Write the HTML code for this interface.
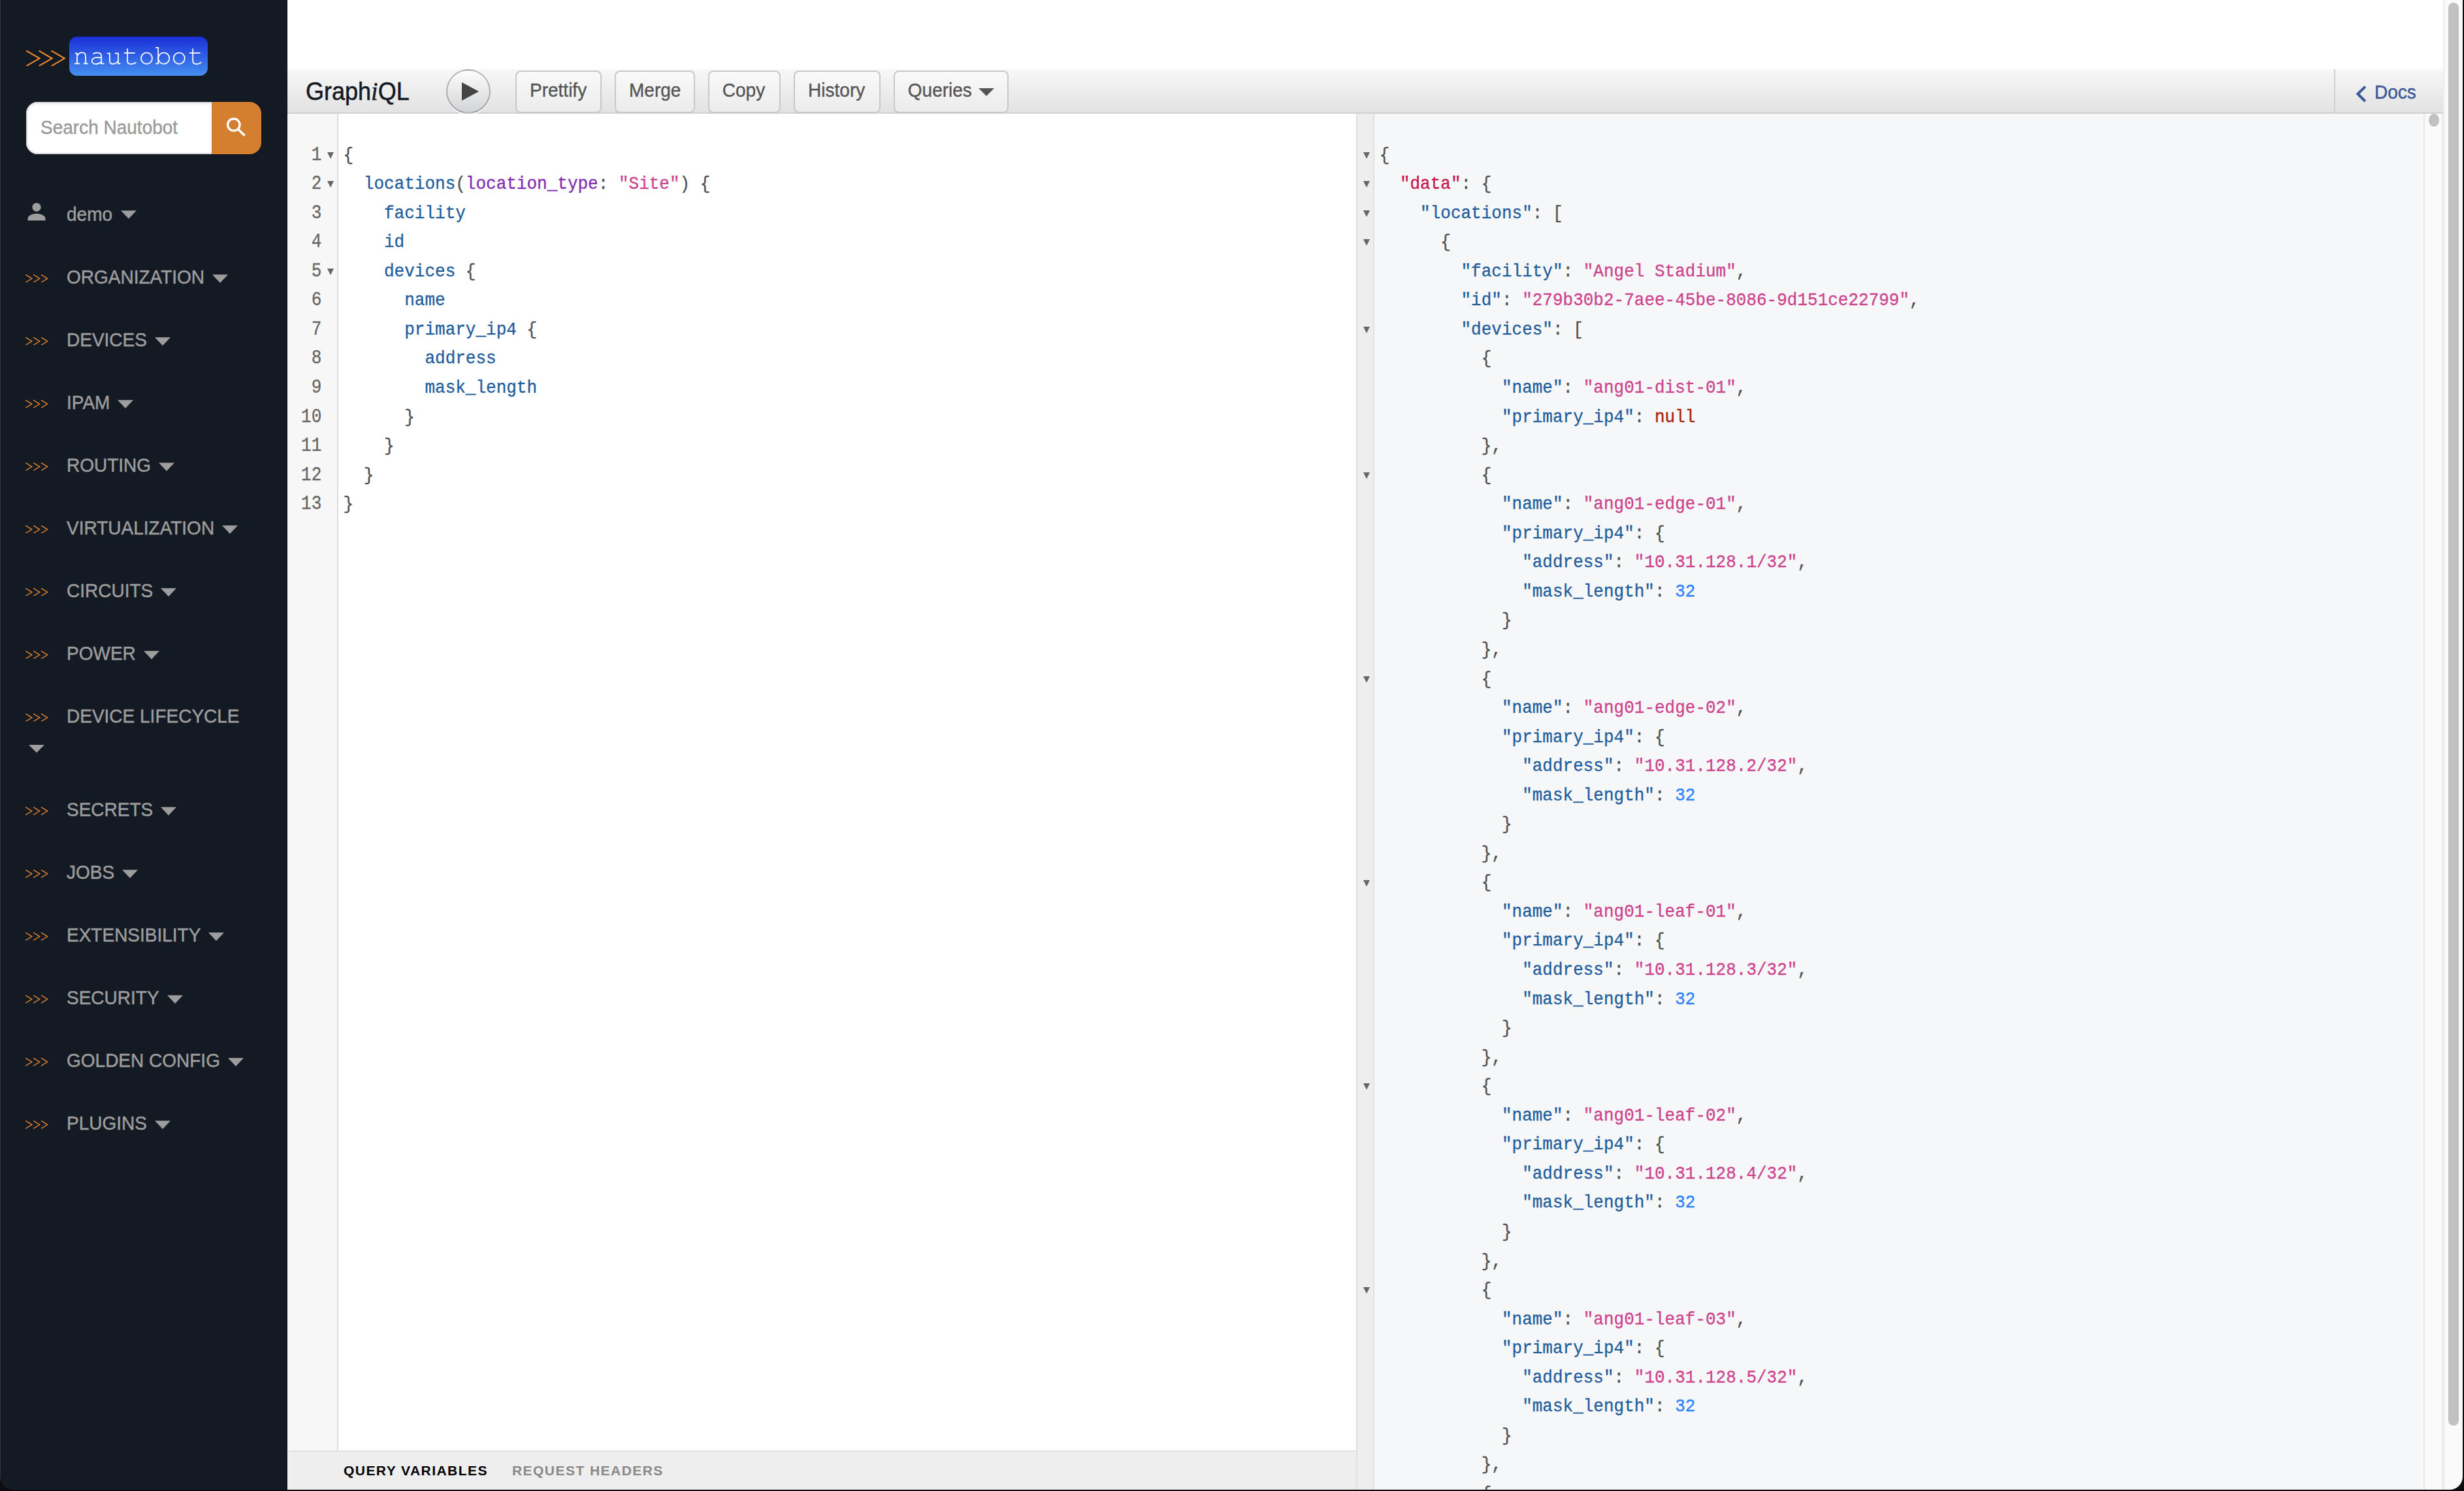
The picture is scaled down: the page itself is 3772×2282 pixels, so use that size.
<!DOCTYPE html>
<html><head><meta charset="utf-8">
<style>
html,body{margin:0;padding:0;}
body{width:3772px;height:2282px;background:#0b0b10;position:relative;overflow:hidden;font-family:"Liberation Sans",sans-serif;}
#win{position:absolute;left:0;top:0;width:3770px;height:2280px;background:transparent;border-radius:0 0 20px 20px;overflow:hidden;}
#side{position:absolute;left:0;top:0;width:440px;height:2280px;background:#141a24;}
#side .edge{position:absolute;left:0;top:0;width:1px;height:100%;background:#2e333c;}
.logo{position:absolute;left:106px;top:56px;width:212px;height:60px;border-radius:12px;background:linear-gradient(#1a2ed6,#4590f2);}
.logo span{position:absolute;left:4px;top:9px;font-family:"Liberation Mono",monospace;font-size:42px;color:#fff;letter-spacing:0.35px;line-height:48px;transform:scaleY(0.86);transform-origin:0 36px;top:8px;}
.search{position:absolute;left:40px;top:156px;width:284px;height:80px;background:#fff;border-radius:18px 0 0 18px;box-shadow:inset 2px 0 0 #d6d6d6, inset 0 2px 0 #dcdcdc, inset 0 -2px 0 #d6d6d6, inset 0 4px 4px rgba(0,0,0,.06);}
.search span{position:absolute;left:22px;top:22px;font-size:28px;line-height:36px;color:#999;-webkit-text-stroke:0.35px #999;transform:scaleY(1.055);transform-origin:0 27.7px;}
.sbtn{position:absolute;left:324px;top:156px;width:76px;height:80px;background:#d47e30;border-radius:0 18px 18px 0;}
.nv{position:absolute;left:102px;font-size:28px;line-height:32px;color:#9d9d9d;white-space:nowrap;-webkit-text-stroke:0.45px #9d9d9d;transform:scaleY(1.055);transform-origin:0 25.7px;}
.caret{position:absolute;width:0;height:0;border-left:12px solid transparent;border-right:12px solid transparent;border-top:12px solid #9d9d9d;}
.caret.in{position:relative;display:inline-block;vertical-align:middle;margin-left:13px;top:-2px;}
.caret.in2{margin-left:12px;top:0.6px;}
#top{position:absolute;left:440px;top:106px;width:3300px;height:66px;background:linear-gradient(#f7f7f7,#e2e2e2);border-bottom:2px solid #d0d0d0;}
.title{position:absolute;left:28px;top:12.6px;font-size:36px;line-height:42px;color:#141823;-webkit-text-stroke:0.5px #141823;transform:scaleY(1.07);transform-origin:0 33.5px;}
.title em{font-family:"Liberation Serif",serif;font-size:38px;}
.exec{position:absolute;left:243px;top:0px;width:64px;height:64px;border-radius:50%;border:2px solid rgba(0,0,0,0.25);background:linear-gradient(#fdfdfd,#d2d3d6);box-shadow:0 2px 0 #fff;}
.btn{position:absolute;top:2px;height:61px;-webkit-text-stroke:0.35px #555;border:2px solid #c8c8c8;border-radius:8px;background:linear-gradient(#f9f9f9,#ececec);font-size:28px;line-height:58px;color:#555;white-space:nowrap;box-sizing:content-box;}
.btn span{position:absolute;left:20px;top:0px;transform:scaleY(1.06);transform-origin:0 38.7px;}
.docsep{position:absolute;left:3133px;top:0;width:2px;height:66px;background:#d0d0d0;}
.docs{position:absolute;left:3195px;top:18px;font-size:28px;line-height:36px;color:#3B5998;-webkit-text-stroke:0.4px #3B5998;transform:scaleY(1.04);transform-origin:0 27.7px;}
#ed{position:absolute;left:440px;top:174px;width:1636px;height:2046px;background:#fff;}
#gut{position:absolute;left:440px;top:174px;width:76px;height:2046px;background:#f7f7f7;border-right:2px solid #ddd;}
.cl{position:absolute;font-family:"Liberation Mono",monospace;font-size:26px;line-height:44.55px;white-space:pre;height:44.55px;transform:scaleY(1.08);transform-origin:0 29.2px;-webkit-text-stroke-width:0.3px;}
.ln{position:absolute;left:440px;width:52.3px;text-align:right;font-family:"Liberation Mono",monospace;font-size:26px;line-height:44.55px;color:#666;transform:scaleY(1.1);transform-origin:0 29.2px;-webkit-text-stroke-width:0.3px;}
.fold{position:absolute;width:0;height:0;border-left:5.1px solid transparent;border-right:5.1px solid transparent;border-top:10.3px solid #666;}
#foot{position:absolute;left:440px;top:2220px;width:1636px;height:60px;background:#eeeeee;border-top:2px solid #e0e0e0;}
.vt{position:absolute;top:16px;font-size:21px;line-height:26px;font-weight:bold;letter-spacing:1.45px;white-space:nowrap;}
#div1{position:absolute;left:2076px;top:174px;width:2px;height:2106px;background:#e0e0e0;}
#rgut{position:absolute;left:2078px;top:174px;width:24px;height:2106px;background:#eeeeee;border-right:2px solid #e0e0e0;}
#res{position:absolute;left:2104px;top:174px;width:1606px;height:2106px;background:#f6f7f8;}
#rsb{position:absolute;left:3710px;top:174px;width:26px;height:2106px;background:#fafafa;border-left:2px solid #e8e8e8;border-right:4px solid #ececec;box-sizing:content-box;}
.rthumb{position:absolute;left:3718px;top:174px;width:16px;height:20px;border-radius:8px/10px;background:#c1c1c1;}
#osb{position:absolute;left:3742px;top:0;width:28px;height:2280px;background:#fafafa;}
.othumb{position:absolute;left:3748px;top:4px;width:16px;height:2178px;border-radius:8px;background:#c1c1c1;}
</style></head><body>
<div id="win">
<div style="position:absolute;left:440px;top:0;width:3302px;height:106px;background:#fff"></div>
<div id="side"><div class="edge"></div>
<svg style="position:absolute;left:40.0px;top:76.8px" width="59.9" height="24.6" viewBox="0 0 59.9 24.6"><path d="M1.05 1.05 L20.45 12.30 L1.05 23.55 M20.25 1.05 L39.65 12.30 L20.25 23.55 M39.45 1.05 L58.85 12.30 L39.45 23.55" fill="none" stroke="#f08a2c" stroke-width="2.10" stroke-linecap="round" stroke-linejoin="miter"/></svg>
<div class="logo"></div>
<svg style="position:absolute;left:0;top:0" width="440" height="130" viewBox="0 0 440 130"><g fill="none" stroke="#fff" stroke-width="1.75" stroke-linecap="butt" stroke-linejoin="miter">
<path d="M114 97.3 H122.2 M118.1 81.6 V97.3 M114.9 81.6 H118.1 M118.1 85.8 C120 82 122.5 80.4 125.3 80.4 C129 80.4 131.1 82.5 131.1 86.5 V97.3 M127.9 97.3 H134.5"/>
<path d="M142.4 82.6 C144.5 81 146.5 80.5 148.8 80.5 C152.8 80.5 155.2 82.5 155.2 86 V97.3 H159.4 M155.2 88.3 C153 88 151 87.9 148.5 87.9 C143.5 87.9 140.8 90.5 140.8 93.2 C140.8 96 143.2 98 146.6 98 C150 98 153 96.6 155.2 94.8"/>
<path d="M163.9 81.6 H167.9 V93 C167.9 96.2 169.8 97.9 172.6 97.9 C176 97.9 179 96 180.9 93.5 M176 81.6 H180.9 V97.3 H184.4"/>
<path d="M195 74.3 V93.5 C195 96.6 197 98 200.8 98 C203.5 98 206 97 208.4 95.4 M189.9 81.1 H206.5"/>
<ellipse cx="224.5" cy="89.2" rx="8.5" ry="8.6"/>
<path d="M238.1 72.9 H242.2 V97.3 H238.1"/>
<ellipse cx="250.8" cy="89.2" rx="8.5" ry="8.6"/>
<ellipse cx="274.3" cy="89.2" rx="8.5" ry="8.6"/>
<path d="M295.2 74.3 V93.5 C295.2 96.6 297.2 98 301.2 98 C303.9 98 306.2 97 308.4 95.4 M289.9 81.1 H306.5"/>
</g></svg>
<div class="search"><span>Search Nautobot</span></div>
<div class="sbtn"><svg style="position:absolute;left:20px;top:20px" width="40" height="40" viewBox="0 0 40 40"><circle cx="13.8" cy="14.9" r="9.2" fill="none" stroke="#fff" stroke-width="3.4"/><path d="M20.2 21.5 L30.6 31.6" stroke="#fff" stroke-width="3.5" stroke-linecap="butt"/></svg></div>
<svg style="position:absolute;left:42px;top:310px" width="28" height="28" viewBox="0 0 28 28"><circle cx="14" cy="7.2" r="6.6" fill="#9d9d9d"/><path d="M0.5 27.6 L0.5 24.5 C0.5 19.5 8 17 14 17 C20 17 27.5 19.5 27.5 24.5 L27.5 27.6 Z" fill="#9d9d9d"/></svg>
<div class="nv" style="top:312.6px">demo<span class="caret in"></span></div>
<svg style="position:absolute;left:39.3px;top:419.7px" width="34.4" height="12.6" viewBox="0 0 34.4 12.6"><path d="M0.72 0.72 L9.88 6.30 L0.72 11.88 M12.62 0.72 L21.77 6.30 L12.62 11.88 M24.53 0.72 L33.67 6.30 L24.53 11.88" fill="none" stroke="#d98030" stroke-width="1.45" stroke-linecap="round" stroke-linejoin="miter"/></svg>
<div class="nv" style="top:408.5px">ORGANIZATION<span class="caret in in2"></span></div>
<svg style="position:absolute;left:39.3px;top:515.7px" width="34.4" height="12.6" viewBox="0 0 34.4 12.6"><path d="M0.72 0.72 L9.88 6.30 L0.72 11.88 M12.62 0.72 L21.77 6.30 L12.62 11.88 M24.53 0.72 L33.67 6.30 L24.53 11.88" fill="none" stroke="#d98030" stroke-width="1.45" stroke-linecap="round" stroke-linejoin="miter"/></svg>
<div class="nv" style="top:504.5px">DEVICES<span class="caret in in2"></span></div>
<svg style="position:absolute;left:39.3px;top:611.7px" width="34.4" height="12.6" viewBox="0 0 34.4 12.6"><path d="M0.72 0.72 L9.88 6.30 L0.72 11.88 M12.62 0.72 L21.77 6.30 L12.62 11.88 M24.53 0.72 L33.67 6.30 L24.53 11.88" fill="none" stroke="#d98030" stroke-width="1.45" stroke-linecap="round" stroke-linejoin="miter"/></svg>
<div class="nv" style="top:600.5px">IPAM<span class="caret in in2"></span></div>
<svg style="position:absolute;left:39.3px;top:707.7px" width="34.4" height="12.6" viewBox="0 0 34.4 12.6"><path d="M0.72 0.72 L9.88 6.30 L0.72 11.88 M12.62 0.72 L21.77 6.30 L12.62 11.88 M24.53 0.72 L33.67 6.30 L24.53 11.88" fill="none" stroke="#d98030" stroke-width="1.45" stroke-linecap="round" stroke-linejoin="miter"/></svg>
<div class="nv" style="top:696.5px">ROUTING<span class="caret in in2"></span></div>
<svg style="position:absolute;left:39.3px;top:803.7px" width="34.4" height="12.6" viewBox="0 0 34.4 12.6"><path d="M0.72 0.72 L9.88 6.30 L0.72 11.88 M12.62 0.72 L21.77 6.30 L12.62 11.88 M24.53 0.72 L33.67 6.30 L24.53 11.88" fill="none" stroke="#d98030" stroke-width="1.45" stroke-linecap="round" stroke-linejoin="miter"/></svg>
<div class="nv" style="top:792.5px">VIRTUALIZATION<span class="caret in in2"></span></div>
<svg style="position:absolute;left:39.3px;top:899.7px" width="34.4" height="12.6" viewBox="0 0 34.4 12.6"><path d="M0.72 0.72 L9.88 6.30 L0.72 11.88 M12.62 0.72 L21.77 6.30 L12.62 11.88 M24.53 0.72 L33.67 6.30 L24.53 11.88" fill="none" stroke="#d98030" stroke-width="1.45" stroke-linecap="round" stroke-linejoin="miter"/></svg>
<div class="nv" style="top:888.5px">CIRCUITS<span class="caret in in2"></span></div>
<svg style="position:absolute;left:39.3px;top:995.7px" width="34.4" height="12.6" viewBox="0 0 34.4 12.6"><path d="M0.72 0.72 L9.88 6.30 L0.72 11.88 M12.62 0.72 L21.77 6.30 L12.62 11.88 M24.53 0.72 L33.67 6.30 L24.53 11.88" fill="none" stroke="#d98030" stroke-width="1.45" stroke-linecap="round" stroke-linejoin="miter"/></svg>
<div class="nv" style="top:984.5px">POWER<span class="caret in in2"></span></div>
<svg style="position:absolute;left:39.3px;top:1091.7px" width="34.4" height="12.6" viewBox="0 0 34.4 12.6"><path d="M0.72 0.72 L9.88 6.30 L0.72 11.88 M12.62 0.72 L21.77 6.30 L12.62 11.88 M24.53 0.72 L33.67 6.30 L24.53 11.88" fill="none" stroke="#d98030" stroke-width="1.45" stroke-linecap="round" stroke-linejoin="miter"/></svg>
<div class="nv" style="top:1080.5px">DEVICE LIFECYCLE</div>
<div class="caret" style="left:44px;top:1140.0px"></div>
<svg style="position:absolute;left:39.3px;top:1235.2px" width="34.4" height="12.6" viewBox="0 0 34.4 12.6"><path d="M0.72 0.72 L9.88 6.30 L0.72 11.88 M12.62 0.72 L21.77 6.30 L12.62 11.88 M24.53 0.72 L33.67 6.30 L24.53 11.88" fill="none" stroke="#d98030" stroke-width="1.45" stroke-linecap="round" stroke-linejoin="miter"/></svg>
<div class="nv" style="top:1224.0px">SECRETS<span class="caret in in2"></span></div>
<svg style="position:absolute;left:39.3px;top:1331.2px" width="34.4" height="12.6" viewBox="0 0 34.4 12.6"><path d="M0.72 0.72 L9.88 6.30 L0.72 11.88 M12.62 0.72 L21.77 6.30 L12.62 11.88 M24.53 0.72 L33.67 6.30 L24.53 11.88" fill="none" stroke="#d98030" stroke-width="1.45" stroke-linecap="round" stroke-linejoin="miter"/></svg>
<div class="nv" style="top:1320.0px">JOBS<span class="caret in in2"></span></div>
<svg style="position:absolute;left:39.3px;top:1427.2px" width="34.4" height="12.6" viewBox="0 0 34.4 12.6"><path d="M0.72 0.72 L9.88 6.30 L0.72 11.88 M12.62 0.72 L21.77 6.30 L12.62 11.88 M24.53 0.72 L33.67 6.30 L24.53 11.88" fill="none" stroke="#d98030" stroke-width="1.45" stroke-linecap="round" stroke-linejoin="miter"/></svg>
<div class="nv" style="top:1416.0px">EXTENSIBILITY<span class="caret in in2"></span></div>
<svg style="position:absolute;left:39.3px;top:1523.2px" width="34.4" height="12.6" viewBox="0 0 34.4 12.6"><path d="M0.72 0.72 L9.88 6.30 L0.72 11.88 M12.62 0.72 L21.77 6.30 L12.62 11.88 M24.53 0.72 L33.67 6.30 L24.53 11.88" fill="none" stroke="#d98030" stroke-width="1.45" stroke-linecap="round" stroke-linejoin="miter"/></svg>
<div class="nv" style="top:1512.0px">SECURITY<span class="caret in in2"></span></div>
<svg style="position:absolute;left:39.3px;top:1619.2px" width="34.4" height="12.6" viewBox="0 0 34.4 12.6"><path d="M0.72 0.72 L9.88 6.30 L0.72 11.88 M12.62 0.72 L21.77 6.30 L12.62 11.88 M24.53 0.72 L33.67 6.30 L24.53 11.88" fill="none" stroke="#d98030" stroke-width="1.45" stroke-linecap="round" stroke-linejoin="miter"/></svg>
<div class="nv" style="top:1608.0px">GOLDEN CONFIG<span class="caret in in2"></span></div>
<svg style="position:absolute;left:39.3px;top:1715.2px" width="34.4" height="12.6" viewBox="0 0 34.4 12.6"><path d="M0.72 0.72 L9.88 6.30 L0.72 11.88 M12.62 0.72 L21.77 6.30 L12.62 11.88 M24.53 0.72 L33.67 6.30 L24.53 11.88" fill="none" stroke="#d98030" stroke-width="1.45" stroke-linecap="round" stroke-linejoin="miter"/></svg>
<div class="nv" style="top:1704.0px">PLUGINS<span class="caret in in2"></span></div>
</div>
<div id="top">
<div class="title">Graph<em>i</em>QL</div>
<div class="exec"><svg style="position:absolute;left:0;top:0" width="64" height="64" viewBox="0 0 64 64"><path d="M22 18 L48 32 L22 46 Z" fill="#444"/></svg></div>
<div class="btn" style="left:349px;width:127.5px"><span>Prettify</span></div>
<div class="btn" style="left:501px;width:119px"><span>Merge</span></div>
<div class="btn" style="left:643.8px;width:107.4px"><span>Copy</span></div>
<div class="btn" style="left:775.1px;width:128.8px"><span>History</span></div>
<div class="btn" style="left:927.8px;width:172px"><span>Queries</span><div class="caret" style="left:128px;top:25px;border-left-width:12px;border-right-width:12px;border-top-width:12.2px;border-top-color:#555"></div></div>
<div class="docsep"></div>
<svg style="position:absolute;left:3165px;top:24px" width="20" height="28" viewBox="0 0 20 28"><path d="M15.8 2.6 L4.4 13.8 L15.8 25" fill="none" stroke="#3B5998" stroke-width="4" stroke-linecap="butt"/></svg>
<div class="docs">Docs</div>
</div>
<div id="ed"></div>
<div id="gut"></div>
<div class="ln" style="top:215.61px">1</div>
<div class="ln" style="top:260.16px">2</div>
<div class="ln" style="top:304.71px">3</div>
<div class="ln" style="top:349.26px">4</div>
<div class="ln" style="top:393.81px">5</div>
<div class="ln" style="top:438.36px">6</div>
<div class="ln" style="top:482.91px">7</div>
<div class="ln" style="top:527.46px">8</div>
<div class="ln" style="top:572.01px">9</div>
<div class="ln" style="top:616.56px">10</div>
<div class="ln" style="top:661.11px">11</div>
<div class="ln" style="top:705.66px">12</div>
<div class="ln" style="top:750.21px">13</div>
<div class="fold" style="left:500.7px;top:232.8px"></div>
<div class="fold" style="left:500.7px;top:277.4px"></div>
<div class="fold" style="left:500.7px;top:411.0px"></div>
<div class="cl" style="top:215.61px;left:525.60px"><span style="color:#505050">{</span></div>
<div class="cl" style="top:260.16px;left:525.60px"><span style="color:#505050">  </span><span style="color:#1F5D9C">locations</span><span style="color:#505050">(</span><span style="color:#842DB4">location_type</span><span style="color:#505050">: </span><span style="color:#CD438E">&quot;Site&quot;</span><span style="color:#505050">) {</span></div>
<div class="cl" style="top:304.71px;left:525.60px"><span style="color:#505050">    </span><span style="color:#1F5D9C">facility</span></div>
<div class="cl" style="top:349.26px;left:525.60px"><span style="color:#505050">    </span><span style="color:#1F5D9C">id</span></div>
<div class="cl" style="top:393.81px;left:525.60px"><span style="color:#505050">    </span><span style="color:#1F5D9C">devices</span><span style="color:#505050"> {</span></div>
<div class="cl" style="top:438.36px;left:525.60px"><span style="color:#505050">      </span><span style="color:#1F5D9C">name</span></div>
<div class="cl" style="top:482.91px;left:525.60px"><span style="color:#505050">      </span><span style="color:#1F5D9C">primary_ip4</span><span style="color:#505050"> {</span></div>
<div class="cl" style="top:527.46px;left:525.60px"><span style="color:#505050">        </span><span style="color:#1F5D9C">address</span></div>
<div class="cl" style="top:572.01px;left:525.60px"><span style="color:#505050">        </span><span style="color:#1F5D9C">mask_length</span></div>
<div class="cl" style="top:616.56px;left:525.60px"><span style="color:#505050">      }</span></div>
<div class="cl" style="top:661.11px;left:525.60px"><span style="color:#505050">    }</span></div>
<div class="cl" style="top:705.66px;left:525.60px"><span style="color:#505050">  }</span></div>
<div class="cl" style="top:750.21px;left:525.60px"><span style="color:#505050">}</span></div>
<div id="foot"><div class="vt" style="left:86px;color:#000">QUERY VARIABLES</div><div class="vt" style="left:344px;color:#888">REQUEST HEADERS</div></div>
<div id="div1"></div>
<div id="rgut"></div>
<div id="res"></div>
<div class="fold" style="left:2086.9px;top:232.8px"></div>
<div class="fold" style="left:2086.9px;top:277.4px"></div>
<div class="fold" style="left:2086.9px;top:321.9px"></div>
<div class="fold" style="left:2086.9px;top:366.4px"></div>
<div class="fold" style="left:2086.9px;top:500.1px"></div>
<div class="fold" style="left:2086.9px;top:722.8px"></div>
<div class="fold" style="left:2086.9px;top:1034.7px"></div>
<div class="fold" style="left:2086.9px;top:1346.5px"></div>
<div class="fold" style="left:2086.9px;top:1658.4px"></div>
<div class="fold" style="left:2086.9px;top:1970.2px"></div>
<div class="fold" style="left:2086.9px;top:2282.1px"></div>
<div class="cl" style="top:215.61px;left:2111.70px"><span style="color:#505050">{</span></div>
<div class="cl" style="top:260.16px;left:2111.70px"><span style="color:#505050">  </span><span style="color:#C8134C">&quot;data&quot;</span><span style="color:#505050">: {</span></div>
<div class="cl" style="top:304.71px;left:2111.70px"><span style="color:#505050">    </span><span style="color:#1F5D9C">&quot;locations&quot;</span><span style="color:#505050">: [</span></div>
<div class="cl" style="top:349.26px;left:2111.70px"><span style="color:#505050">      {</span></div>
<div class="cl" style="top:393.81px;left:2111.70px"><span style="color:#505050">        </span><span style="color:#1F5D9C">&quot;facility&quot;</span><span style="color:#505050">: </span><span style="color:#CD438E">&quot;Angel Stadium&quot;</span><span style="color:#505050">,</span></div>
<div class="cl" style="top:438.36px;left:2111.70px"><span style="color:#505050">        </span><span style="color:#1F5D9C">&quot;id&quot;</span><span style="color:#505050">: </span><span style="color:#CD438E">&quot;279b30b2-7aee-45be-8086-9d151ce22799&quot;</span><span style="color:#505050">,</span></div>
<div class="cl" style="top:482.91px;left:2111.70px"><span style="color:#505050">        </span><span style="color:#1F5D9C">&quot;devices&quot;</span><span style="color:#505050">: [</span></div>
<div class="cl" style="top:527.46px;left:2111.70px"><span style="color:#505050">          {</span></div>
<div class="cl" style="top:572.01px;left:2111.70px"><span style="color:#505050">            </span><span style="color:#1F5D9C">&quot;name&quot;</span><span style="color:#505050">: </span><span style="color:#CD438E">&quot;ang01-dist-01&quot;</span><span style="color:#505050">,</span></div>
<div class="cl" style="top:616.56px;left:2111.70px"><span style="color:#505050">            </span><span style="color:#1F5D9C">&quot;primary_ip4&quot;</span><span style="color:#505050">: </span><span style="color:#A8200A">null</span></div>
<div class="cl" style="top:661.11px;left:2111.70px"><span style="color:#505050">          },</span></div>
<div class="cl" style="top:705.66px;left:2111.70px"><span style="color:#505050">          {</span></div>
<div class="cl" style="top:750.21px;left:2111.70px"><span style="color:#505050">            </span><span style="color:#1F5D9C">&quot;name&quot;</span><span style="color:#505050">: </span><span style="color:#CD438E">&quot;ang01-edge-01&quot;</span><span style="color:#505050">,</span></div>
<div class="cl" style="top:794.76px;left:2111.70px"><span style="color:#505050">            </span><span style="color:#1F5D9C">&quot;primary_ip4&quot;</span><span style="color:#505050">: {</span></div>
<div class="cl" style="top:839.31px;left:2111.70px"><span style="color:#505050">              </span><span style="color:#1F5D9C">&quot;address&quot;</span><span style="color:#505050">: </span><span style="color:#CD438E">&quot;10.31.128.1/32&quot;</span><span style="color:#505050">,</span></div>
<div class="cl" style="top:883.86px;left:2111.70px"><span style="color:#505050">              </span><span style="color:#1F5D9C">&quot;mask_length&quot;</span><span style="color:#505050">: </span><span style="color:#2882F9">32</span></div>
<div class="cl" style="top:928.41px;left:2111.70px"><span style="color:#505050">            }</span></div>
<div class="cl" style="top:972.96px;left:2111.70px"><span style="color:#505050">          },</span></div>
<div class="cl" style="top:1017.51px;left:2111.70px"><span style="color:#505050">          {</span></div>
<div class="cl" style="top:1062.06px;left:2111.70px"><span style="color:#505050">            </span><span style="color:#1F5D9C">&quot;name&quot;</span><span style="color:#505050">: </span><span style="color:#CD438E">&quot;ang01-edge-02&quot;</span><span style="color:#505050">,</span></div>
<div class="cl" style="top:1106.61px;left:2111.70px"><span style="color:#505050">            </span><span style="color:#1F5D9C">&quot;primary_ip4&quot;</span><span style="color:#505050">: {</span></div>
<div class="cl" style="top:1151.16px;left:2111.70px"><span style="color:#505050">              </span><span style="color:#1F5D9C">&quot;address&quot;</span><span style="color:#505050">: </span><span style="color:#CD438E">&quot;10.31.128.2/32&quot;</span><span style="color:#505050">,</span></div>
<div class="cl" style="top:1195.71px;left:2111.70px"><span style="color:#505050">              </span><span style="color:#1F5D9C">&quot;mask_length&quot;</span><span style="color:#505050">: </span><span style="color:#2882F9">32</span></div>
<div class="cl" style="top:1240.26px;left:2111.70px"><span style="color:#505050">            }</span></div>
<div class="cl" style="top:1284.81px;left:2111.70px"><span style="color:#505050">          },</span></div>
<div class="cl" style="top:1329.36px;left:2111.70px"><span style="color:#505050">          {</span></div>
<div class="cl" style="top:1373.91px;left:2111.70px"><span style="color:#505050">            </span><span style="color:#1F5D9C">&quot;name&quot;</span><span style="color:#505050">: </span><span style="color:#CD438E">&quot;ang01-leaf-01&quot;</span><span style="color:#505050">,</span></div>
<div class="cl" style="top:1418.46px;left:2111.70px"><span style="color:#505050">            </span><span style="color:#1F5D9C">&quot;primary_ip4&quot;</span><span style="color:#505050">: {</span></div>
<div class="cl" style="top:1463.01px;left:2111.70px"><span style="color:#505050">              </span><span style="color:#1F5D9C">&quot;address&quot;</span><span style="color:#505050">: </span><span style="color:#CD438E">&quot;10.31.128.3/32&quot;</span><span style="color:#505050">,</span></div>
<div class="cl" style="top:1507.56px;left:2111.70px"><span style="color:#505050">              </span><span style="color:#1F5D9C">&quot;mask_length&quot;</span><span style="color:#505050">: </span><span style="color:#2882F9">32</span></div>
<div class="cl" style="top:1552.11px;left:2111.70px"><span style="color:#505050">            }</span></div>
<div class="cl" style="top:1596.66px;left:2111.70px"><span style="color:#505050">          },</span></div>
<div class="cl" style="top:1641.21px;left:2111.70px"><span style="color:#505050">          {</span></div>
<div class="cl" style="top:1685.76px;left:2111.70px"><span style="color:#505050">            </span><span style="color:#1F5D9C">&quot;name&quot;</span><span style="color:#505050">: </span><span style="color:#CD438E">&quot;ang01-leaf-02&quot;</span><span style="color:#505050">,</span></div>
<div class="cl" style="top:1730.31px;left:2111.70px"><span style="color:#505050">            </span><span style="color:#1F5D9C">&quot;primary_ip4&quot;</span><span style="color:#505050">: {</span></div>
<div class="cl" style="top:1774.86px;left:2111.70px"><span style="color:#505050">              </span><span style="color:#1F5D9C">&quot;address&quot;</span><span style="color:#505050">: </span><span style="color:#CD438E">&quot;10.31.128.4/32&quot;</span><span style="color:#505050">,</span></div>
<div class="cl" style="top:1819.41px;left:2111.70px"><span style="color:#505050">              </span><span style="color:#1F5D9C">&quot;mask_length&quot;</span><span style="color:#505050">: </span><span style="color:#2882F9">32</span></div>
<div class="cl" style="top:1863.96px;left:2111.70px"><span style="color:#505050">            }</span></div>
<div class="cl" style="top:1908.51px;left:2111.70px"><span style="color:#505050">          },</span></div>
<div class="cl" style="top:1953.06px;left:2111.70px"><span style="color:#505050">          {</span></div>
<div class="cl" style="top:1997.61px;left:2111.70px"><span style="color:#505050">            </span><span style="color:#1F5D9C">&quot;name&quot;</span><span style="color:#505050">: </span><span style="color:#CD438E">&quot;ang01-leaf-03&quot;</span><span style="color:#505050">,</span></div>
<div class="cl" style="top:2042.16px;left:2111.70px"><span style="color:#505050">            </span><span style="color:#1F5D9C">&quot;primary_ip4&quot;</span><span style="color:#505050">: {</span></div>
<div class="cl" style="top:2086.71px;left:2111.70px"><span style="color:#505050">              </span><span style="color:#1F5D9C">&quot;address&quot;</span><span style="color:#505050">: </span><span style="color:#CD438E">&quot;10.31.128.5/32&quot;</span><span style="color:#505050">,</span></div>
<div class="cl" style="top:2131.26px;left:2111.70px"><span style="color:#505050">              </span><span style="color:#1F5D9C">&quot;mask_length&quot;</span><span style="color:#505050">: </span><span style="color:#2882F9">32</span></div>
<div class="cl" style="top:2175.81px;left:2111.70px"><span style="color:#505050">            }</span></div>
<div class="cl" style="top:2220.36px;left:2111.70px"><span style="color:#505050">          },</span></div>
<div class="cl" style="top:2264.91px;left:2111.70px"><span style="color:#505050">          {</span></div>
<div id="rsb"></div>
<div class="rthumb"></div>
<div id="osb"></div>
<div style="position:absolute;left:439px;top:0;width:1px;height:2280px;background:#050a14"></div><div style="position:absolute;left:440px;top:174px;width:1px;height:2106px;background:#fff"></div>
<div style="position:absolute;left:3740px;top:0;width:2px;height:2280px;background:#ececec"></div>
<div class="othumb"></div>
</div>
</body></html>
